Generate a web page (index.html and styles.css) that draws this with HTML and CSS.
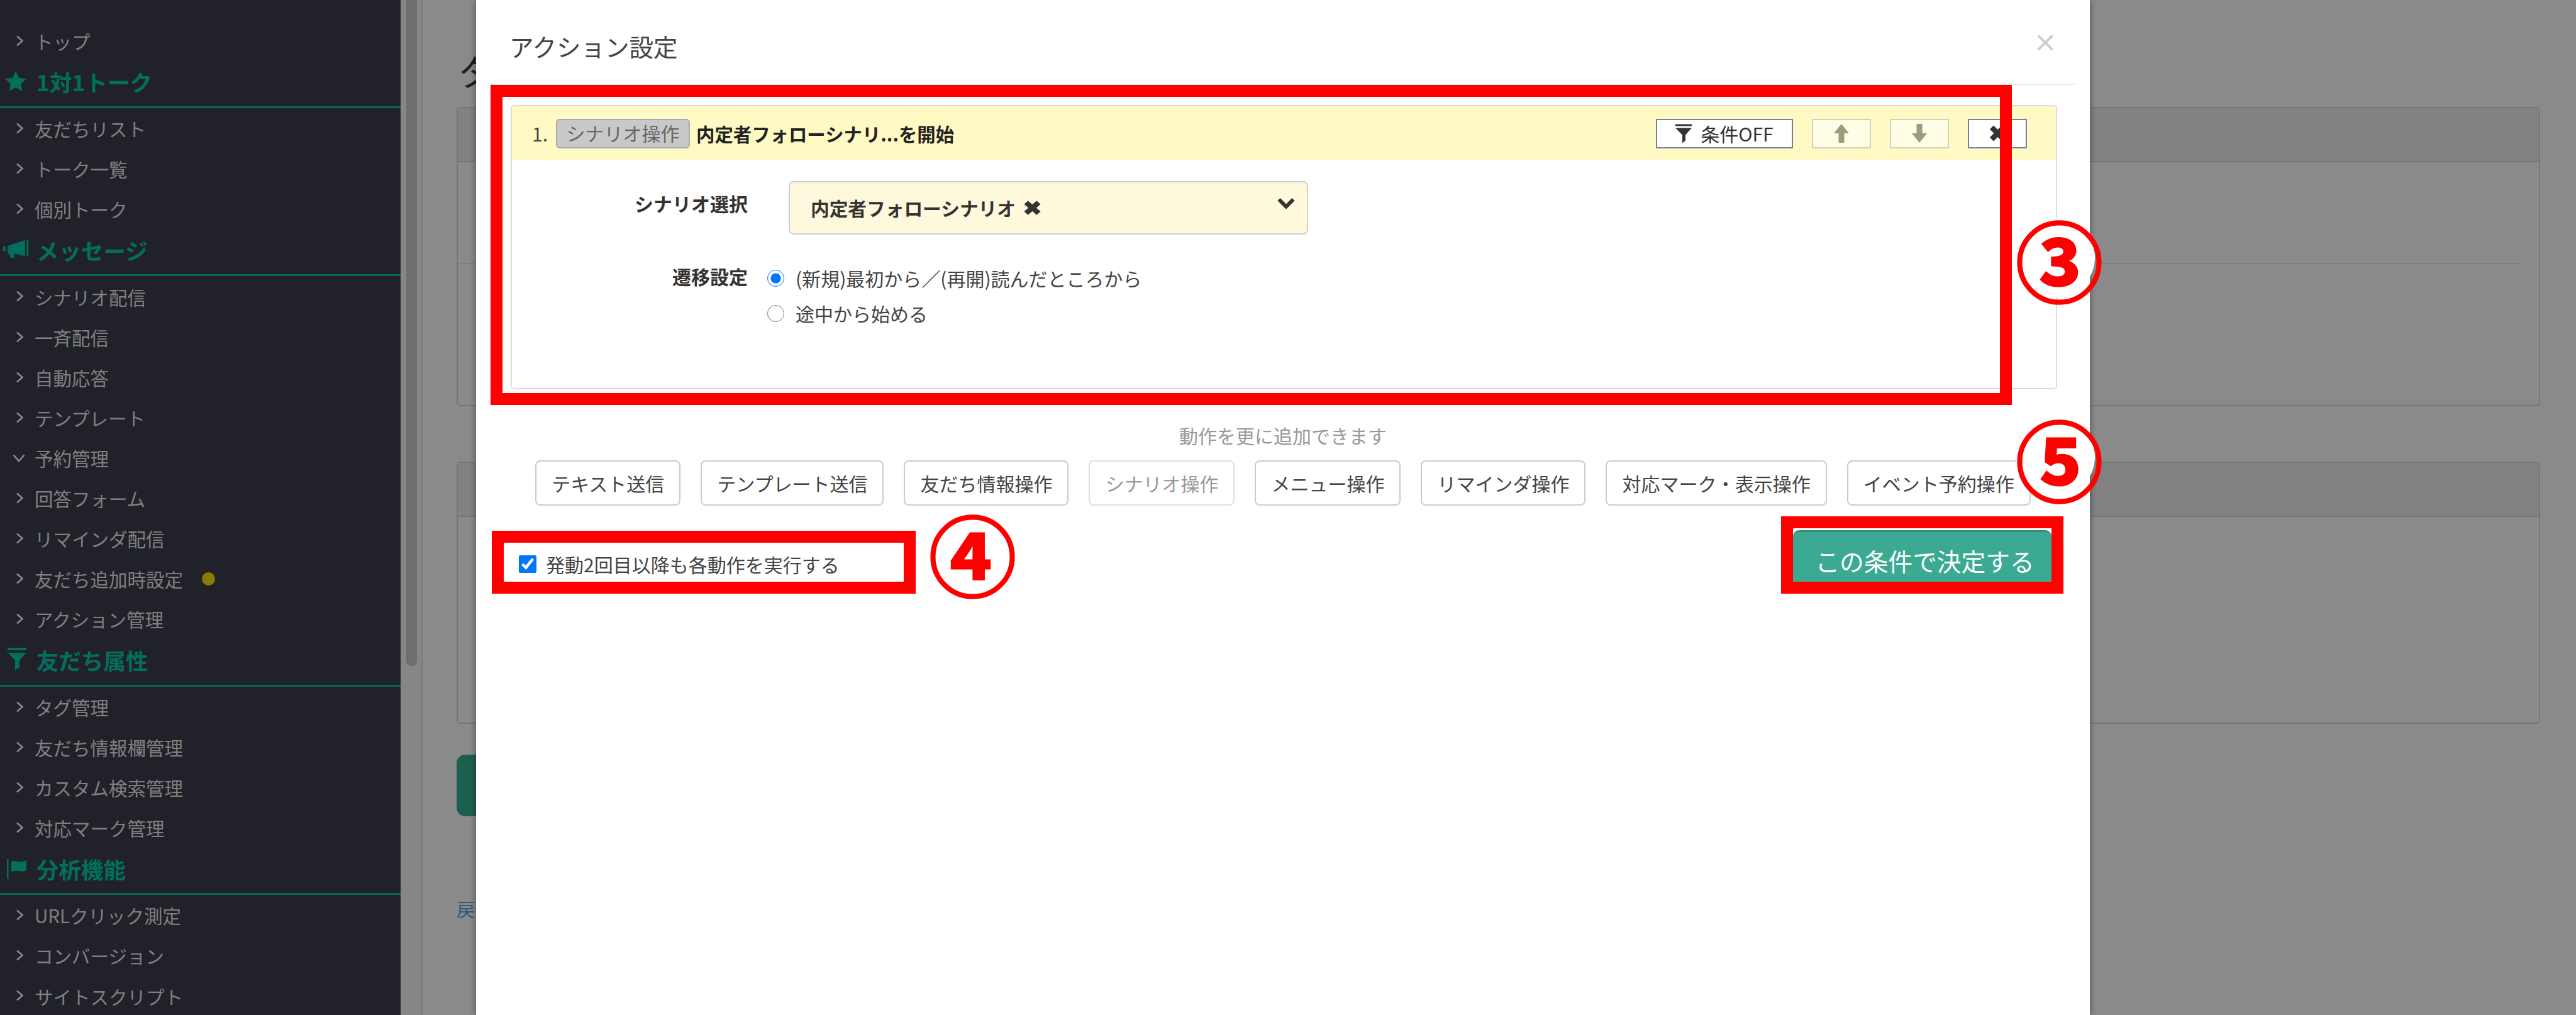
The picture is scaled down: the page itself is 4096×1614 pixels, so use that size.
FILE: index.html
```html
<!DOCTYPE html>
<html lang="ja">
<head>
  <meta charset="UTF-8" />
  <title>アクション設定</title>
  <link rel="stylesheet" href="styles.css">
</head>
<body>

<aside class="sidebar">
  <a class="item"><svg class="chev" viewBox="0 0 13 18"><path d="M2 1.500 10.500 9 2 16.500"/></svg>トップ</a>
  <div class="group">
    <span class="group-icon"><svg width="34" height="32" viewBox="0 0 34 32"><path d="M17 0l5 10.800 12 1.400-8.900 8.100 2.400 11.700L17 26.200 6.500 32l2.400-11.700L0 12.200l12-1.400z"/></svg></span>1対1トーク
  </div>
  <a class="item"><svg class="chev" viewBox="0 0 13 18"><path d="M2 1.500 10.500 9 2 16.500"/></svg>友だちリスト</a>
  <a class="item"><svg class="chev" viewBox="0 0 13 18"><path d="M2 1.500 10.500 9 2 16.500"/></svg>トーク一覧</a>
  <a class="item"><svg class="chev" viewBox="0 0 13 18"><path d="M2 1.500 10.500 9 2 16.500"/></svg>個別トーク</a>
  <div class="group">
    <span class="group-icon horn"><svg width="42" height="33" viewBox="5 420 46 36"><path d="M5 433h4v8H5zM13 432 43 422v28l-15-4h-5l2 7h-7l-3-8h-2zM46 421h3v29h-3z"/></svg></span>メッセージ
  </div>
  <a class="item"><svg class="chev" viewBox="0 0 13 18"><path d="M2 1.500 10.500 9 2 16.500"/></svg>シナリオ配信</a>
  <a class="item"><svg class="chev" viewBox="0 0 13 18"><path d="M2 1.500 10.500 9 2 16.500"/></svg>一斉配信</a>
  <a class="item"><svg class="chev" viewBox="0 0 13 18"><path d="M2 1.500 10.500 9 2 16.500"/></svg>自動応答</a>
  <a class="item"><svg class="chev" viewBox="0 0 13 18"><path d="M2 1.500 10.500 9 2 16.500"/></svg>テンプレート</a>
  <a class="item"><svg class="chev-down" viewBox="0 0 20 13"><path d="M1.500 1.500 10 11 18.500 1.500"/></svg>予約管理</a>
  <a class="item"><svg class="chev" viewBox="0 0 13 18"><path d="M2 1.500 10.500 9 2 16.500"/></svg>回答フォーム</a>
  <a class="item"><svg class="chev" viewBox="0 0 13 18"><path d="M2 1.500 10.500 9 2 16.500"/></svg>リマインダ配信</a>
  <a class="item"><svg class="chev" viewBox="0 0 13 18"><path d="M2 1.500 10.500 9 2 16.500"/></svg>友だち追加時設定<span class="dot"></span></a>
  <a class="item"><svg class="chev" viewBox="0 0 13 18"><path d="M2 1.500 10.500 9 2 16.500"/></svg>アクション管理</a>
  <div class="group">
    <span class="group-icon filter"><svg width="30" height="36" viewBox="0 0 30 36"><path d="M0 0h30v4H0zM0 8h30L19 20v11l-7 5V20z"/></svg></span>友だち属性
  </div>
  <a class="item"><svg class="chev" viewBox="0 0 13 18"><path d="M2 1.500 10.500 9 2 16.500"/></svg>タグ管理</a>
  <a class="item"><svg class="chev" viewBox="0 0 13 18"><path d="M2 1.500 10.500 9 2 16.500"/></svg>友だち情報欄管理</a>
  <a class="item"><svg class="chev" viewBox="0 0 13 18"><path d="M2 1.500 10.500 9 2 16.500"/></svg>カスタム検索管理</a>
  <a class="item"><svg class="chev" viewBox="0 0 13 18"><path d="M2 1.500 10.500 9 2 16.500"/></svg>対応マーク管理</a>
  <div class="group">
    <span class="group-icon flag"><svg width="32" height="32" viewBox="0 0 32 32"><path d="M0 0h2.500v32H0zM7 4c6-3 10 2 16 0 3-1 6-1 8-2v16c-6 3-10 1-15 1-4 0-7 0-9 2z"/></svg></span>分析機能
  </div>
  <a class="item"><svg class="chev" viewBox="0 0 13 18"><path d="M2 1.500 10.500 9 2 16.500"/></svg>URLクリック測定</a>
  <a class="item"><svg class="chev" viewBox="0 0 13 18"><path d="M2 1.500 10.500 9 2 16.500"/></svg>コンバージョン</a>
  <a class="item"><svg class="chev" viewBox="0 0 13 18"><path d="M2 1.500 10.500 9 2 16.500"/></svg>サイトスクリプト</a>
</aside>

<div class="scroll-track"><div class="scroll-thumb"></div></div>

<main class="page">
  <h1 class="page-title">タ</h1>
  <section class="card card-first">
    <div class="card-head"></div>
    <div class="card-body"><hr class="card-rule"></div>
  </section>
  <section class="card card-second">
    <div class="card-head"></div>
    <div class="card-body"></div>
  </section>
  <div class="save-btn"></div>
  <a class="back-link">戻</a>
</main>

<div class="modal">
  <div class="modal-header">
    <h2 class="modal-title">アクション設定</h2>
    <span class="modal-close">×</span>
  </div>

  <div class="action-panel">
    <div class="action-head">
      <span class="action-no">1.</span>
      <span class="action-badge">シナリオ操作</span>
      <span class="action-name">内定者フォローシナリ...を開始</span>
      <div class="action-tools">
        <button class="tool tool-cond"><svg width="26" height="31" viewBox="0 0 26 30"><path d="M0 0h26v3H0zM0 6h26L16 17v9l-5 4V17z"/></svg>条件OFF</button>
        <button class="tool tool-move"><svg width="24" height="30" viewBox="0 0 24 30"><path d="M12 0 24 15h-7.500v15h-9V15H0z"/></svg></button>
        <button class="tool tool-move"><svg width="24" height="30" viewBox="0 0 24 30"><path d="M7.500 0h9v15H24L12 30 0 15h7.500z"/></svg></button>
        <button class="tool tool-del"><svg class="x-icon" width="27" height="26" viewBox="1 1 23 23"><path d="M4 4l17 17M21 4 4 21"/></svg></button>
      </div>
    </div>
    <div class="action-body">
      <div class="form-row row-select">
        <label class="form-label">シナリオ選択</label>
        <div class="select-box">
          <span class="select-value">内定者フォローシナリオ</span>
          <svg class="x-icon select-clear" width="27" height="23" viewBox="1 1 23 23" preserveAspectRatio="none"><path d="M4 4l17 17M21 4 4 21"/></svg>
          <svg class="select-arrow" width="28" height="18" viewBox="0 0 28 18"><path d="M2.500 3 14 14.500 25.500 3"/></svg>
        </div>
      </div>
      <div class="form-row row-radio">
        <label class="form-label">遷移設定</label>
        <div class="radio-list">
          <label class="radio"><input type="radio" name="move" checked>(新規)最初から／(再開)読んだところから</label>
          <label class="radio"><input type="radio" name="move">途中から始める</label>
        </div>
      </div>
    </div>
  </div>

  <p class="add-note">動作を更に追加できます</p>
  <div class="add-row">
    <button class="add-btn">テキスト送信</button>
    <button class="add-btn">テンプレート送信</button>
    <button class="add-btn">友だち情報操作</button>
    <button class="add-btn is-off">シナリオ操作</button>
    <button class="add-btn">メニュー操作</button>
    <button class="add-btn">リマインダ操作</button>
    <button class="add-btn">対応マーク・表示操作</button>
    <button class="add-btn">イベント予約操作</button>
  </div>

  <div class="modal-foot">
    <label class="repeat"><input type="checkbox" checked>発動2回目以降も各動作を実行する</label>
    <button class="submit-btn">この条件で決定する</button>
  </div>
</div>

<!-- red call-outs drawn over the screen -->
<div class="mark mark-a"></div>
<div class="mark mark-b"></div>
<div class="mark mark-c"></div>
<span class="num num-3">③</span>
<span class="num num-4">④</span>
<span class="num num-5">⑤</span>

</body>
</html>
```

FILE: styles.css
```css
* {
  box-sizing: border-box;
}
html, body {
  height: 100%;
}
body {
  margin: 0;
  display: flex;
  height: 1614px;
  overflow: hidden;
  position: relative;
  background-color: #8a8a8a;
  font-family: "Noto Sans CJK JP", "Noto Sans", sans-serif;
  font-size: 30px;
  color: #444;
}

/* sidebar */
.sidebar {
  width: 637px;
  flex: none;
  padding-top: 32.500px;
  background-color: #212229;
  color: #808080;
  font-size: 29.500px;
  overflow: hidden;
}
.item {
  display: flex;
  align-items: center;
  height: 64.100px;
  padding-left: 55px;
  position: relative;
}
.chev, .chev-down {
  position: absolute;
  fill: none;
  stroke: #8a8a8a;
  stroke-width: 2.600;
}
.chev {
  left: 25px;
  top: 23px;
  width: 13px;
  height: 18px;
}
.chev-down {
  left: 20px;
  top: 26px;
  width: 20px;
  height: 13px;
}
.dot {
  width: 21px;
  height: 21px;
  margin-left: 30px;
  border-radius: 50%;
  background-color: #8a7a00;
}
.group {
  display: flex;
  align-items: center;
  height: 75.300px;
  padding: 0 0 6px 58px;
  border-bottom: 3px solid #0d6655;
  color: #00705c;
  font-size: 35.500px;
  font-weight: 700;
  position: relative;
}
.group-icon {
  position: absolute;
  left: 8px;
  top: 16px;
  line-height: 0;
  fill: #00705c;
}
.group-icon.horn {
  left: 5px;
  top: 16px;
}
.group-icon.filter {
  left: 12px;
  top: 14px;
}
.group-icon.flag {
  left: 11px;
  top: 18px;
}

/* page behind the modal */
.scroll-track {
  width: 35px;
  flex: none;
  background-color: #868686;
  border-right: 2px solid #7c7c7c;
}
.scroll-thumb {
  width: 17px;
  height: 1059px;
  margin-left: 9px;
  border-radius: 0 0 8px 8px;
  background-color: #6e6e6e;
}
.page {
  flex: 1;
  padding: 0 57px 0 54px;
}
.page-title {
  height: 170px;
  margin: 0;
  padding-top: 70px;
  padding-left: 2px;
  font-size: 58px;
  font-weight: 400;
  line-height: 84px;
  color: #1f1f1f;
}
.card {
  border: 2px solid #767676;
  border-radius: 6px;
}
.card-first {
  height: 476px;
}
.card-second {
  height: 417px;
  margin-top: 88px;
}
.card-head {
  height: 86px;
  background-color: #828282;
  border-bottom: 2px solid #767676;
}
.card-rule {
  margin: 160px 32px 0 0;
  border: none;
  border-top: 2px solid #7e7e7e;
}
.save-btn {
  width: 200px;
  height: 98px;
  margin-top: 49px;
  border-radius: 14px;
  background-color: #1d5f4e;
}
.back-link {
  display: block;
  margin-top: 126px;
  color: #2e5680;
  font-size: 29px;
  line-height: 42px;
}

/* modal */
.modal {
  position: absolute;
  left: 757px;
  top: 0;
  bottom: 0;
  width: 2566px;
  padding: 0 23px;
  background-color: #fff;
  box-shadow: 0 0 10px rgba(0, 0, 0, 0.45);
}
.modal-header {
  display: flex;
  align-items: center;
  justify-content: space-between;
  height: 135px;
  padding: 12px 31px 0 31px;
  margin: 0 0 32px -1px;
  border-bottom: 2px solid #e9ecef;
}
.modal-title {
  margin: 0;
  font-size: 38.500px;
  font-weight: 400;
  color: #444;
}
.modal-close {
  margin-top: -12px;
  font-family: "Liberation Sans", sans-serif;
  font-size: 58px;
  line-height: 1;
  color: #cfcfcf;
}
.action-panel {
  margin-left: 32px;
  margin-right: 29px;
  height: 452px;
  border: 2px solid #dcdcdc;
  border-radius: 6px;
  overflow: hidden;
}
.action-head {
  display: flex;
  align-items: center;
  height: 86px;
  padding: 0 46px 0 32px;
  background-color: #fff9c4;
}
.action-no {
  width: 38px;
}
.action-badge {
  width: 213px;
  height: 47px;
  margin-right: 10px;
  border: 2px solid #aaa;
  border-radius: 6px;
  background-color: #c8c8c8;
  color: #666;
  text-align: center;
  line-height: 41px;
}
.action-name {
  font-size: 29.400px;
  font-weight: 700;
  color: #222;
}
.action-tools {
  display: flex;
  gap: 30px;
  margin-left: auto;
}
.tool {
  display: flex;
  align-items: center;
  justify-content: center;
  width: 94px;
  height: 47px;
  padding: 0;
  border: 2px solid #7a7f99;
  border-radius: 0;
  background-color: #fff;
  font: inherit;
  color: #333;
}
.tool-cond {
  width: 218px;
  gap: 14px;
}
.tool-cond svg {
  fill: #333;
}
.tool-move {
  border-color: #d2d2bc;
  background-color: #fffde5;
}
.tool-move svg {
  fill: #9c9c7c;
}
.x-icon {
  fill: none;
  stroke: #333;
  stroke-width: 7.500;
}
.action-body {
  padding-top: 33px;
}
.form-row {
  display: flex;
}
.form-label {
  width: 375px;
  flex: none;
  text-align: right;
  font-weight: 700;
  color: #333;
}
.row-select {
  height: 85px;
}
.row-select .form-label {
  padding-top: 13px;
}
.select-box {
  display: flex;
  align-items: center;
  width: 826px;
  height: 85px;
  margin-left: 65px;
  padding-left: 33px;
  position: relative;
  border: 2px solid #cfcfcf;
  border-radius: 8px;
  background-color: #fef9dc;
}
.select-value {
  font-size: 29.700px;
  font-weight: 700;
  color: #333;
}
.select-clear {
  margin-left: 13px;
}
.select-arrow {
  position: absolute;
  right: 19px;
  top: 24px;
  fill: none;
  stroke: #333;
  stroke-width: 6;
}
.row-radio {
  margin-top: 41px;
}
.row-radio .form-label {
  padding-top: 3px;
}
.radio-list {
  margin-left: 31px;
}
.radio {
  display: flex;
  align-items: center;
  height: 56px;
  color: #444;
}
.radio input {
  width: 27px;
  height: 27px;
  margin: 0 18px 0 0;
  flex: none;
}
.add-note {
  margin: 52px 0 0;
  text-align: center;
  line-height: 42px;
  color: #999;
}
.add-row {
  display: flex;
  justify-content: center;
  gap: 32px;
  margin-top: 19px;
}
.add-btn {
  height: 72px;
  padding: 0 24px;
  border: 2px solid #ccc;
  border-radius: 8px;
  background-color: #fff;
  font: inherit;
  color: #444;
}
.add-btn.is-off {
  border-color: #e0e0e0;
  color: #999;
}
.modal-foot {
  display: flex;
  justify-content: space-between;
  align-items: flex-start;
  margin: 39px 38px 0 45px;
}
.repeat {
  display: flex;
  align-items: center;
  height: 42px;
  margin-top: 33px;
  color: #444;
}
.repeat input {
  width: 28px;
  height: 28px;
  margin: 0 15px 0 0;
}
.submit-btn {
  width: 411px;
  height: 100px;
  padding: 0 0 8px 8px;
  border: none;
  border-top: 3px solid #2e8f7a;
  border-radius: 10px;
  background-color: #3caa92;
  font: inherit;
  font-size: 38.700px;
  color: #fff;
}

/* call-outs */
.mark {
  position: absolute;
  border: 19.500px solid #f00;
}
.mark-a {
  left: 780px;
  top: 135px;
  width: 2419px;
  height: 509px;
}
.mark-b {
  left: 782px;
  top: 844px;
  width: 674px;
  height: 100px;
}
.mark-c {
  left: 2832px;
  top: 821px;
  width: 449px;
  height: 123px;
}
.num {
  position: absolute;
  width: 126px;
  height: 126px;
  border-radius: 50%;
  background-color: #fff;
  color: #f00;
  font-size: 139px;
  font-weight: 700;
  line-height: 126px;
  text-align: center;
  -webkit-text-stroke: 3px #f00;
}
.num-3 {
  left: 3205px;
  top: 347px;
}
.num-4 {
  left: 1477px;
  top: 815px;
}
.num-5 {
  left: 3205px;
  top: 664px;
}
```
